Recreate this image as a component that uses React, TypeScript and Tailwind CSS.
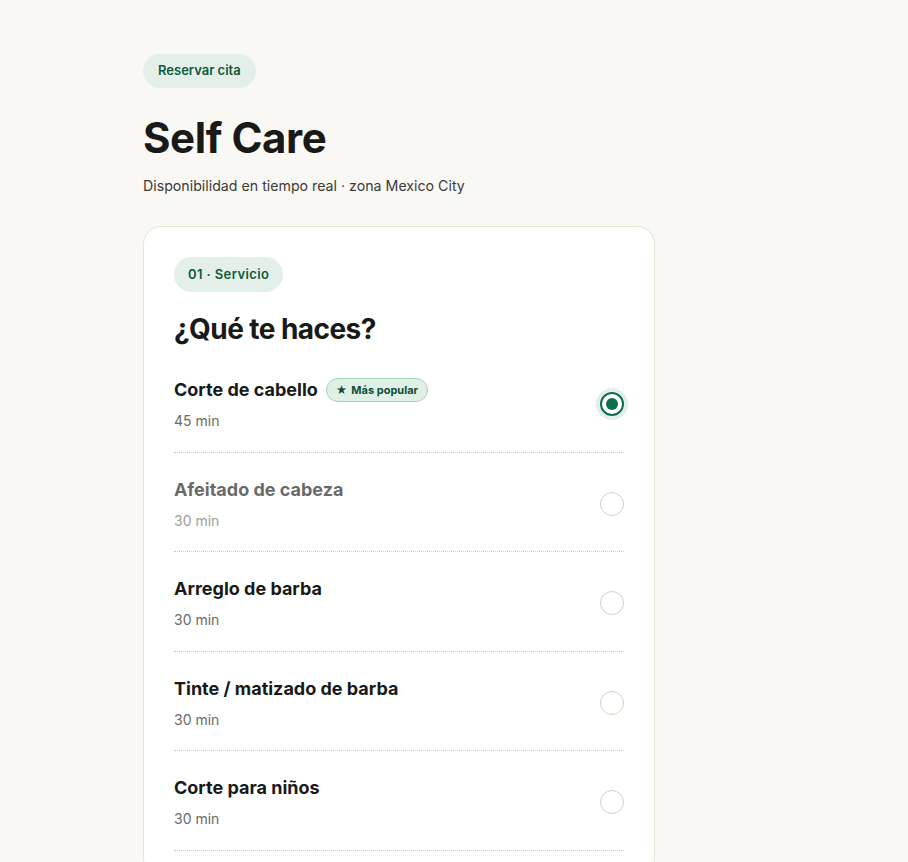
import { useState } from "react";

interface Service {
  id: string;
  name: string;
  duration: string;
  popular?: boolean;
  muted?: boolean;
}

const services: Service[] = [
  { id: "corte", name: "Corte de cabello", duration: "45 min", popular: true },
  { id: "afeitado", name: "Afeitado de cabeza", duration: "30 min", muted: true },
  { id: "barba", name: "Arreglo de barba", duration: "30 min" },
  { id: "tinte", name: "Tinte / matizado de barba", duration: "30 min" },
  { id: "ninos", name: "Corte para niños", duration: "30 min" },
];

function Radio({ checked }: { checked: boolean }) {
  if (checked) {
    return (
      <span className="flex h-[24px] w-[24px] items-center justify-center rounded-full border-2 border-[#0b6e4f] bg-white shadow-[0_0_0_4px_#e2f0e9]">
        <span className="h-[12px] w-[12px] rounded-full bg-[#0b6e4f]" />
      </span>
    );
  }
  return (
    <span className="h-[24px] w-[24px] rounded-full border border-[#d9cfbf] bg-white" />
  );
}

export default function App() {
  const [selected, setSelected] = useState("corte");

  return (
    <div
      className="min-h-screen bg-[#f9f8f4] text-[#191917]"
      style={{ fontFamily: "Inter, 'Noto Sans', sans-serif" }}
    >
      <div className="mx-auto w-[622px] pt-[54px]">
        <span className="inline-flex h-[34px] items-center rounded-full bg-[#e3efe8] px-[15px] text-[13px] font-semibold text-[#0f5a3d]">
          Reservar cita
        </span>

        <h1 className="mt-[24px] text-[42px] font-bold leading-[52px] tracking-[-0.01em]">
          Self Care
        </h1>
        <p className="mt-[12px] text-[14.2px] leading-5 text-[#3b3b38]">
          Disponibilidad en tiempo real · zona Mexico City
        </p>

        <div className="mt-[30px] w-[512px] rounded-[18px] border border-[#e9e2d6] bg-white px-[30px] pt-[30px] pb-6">
          <span className="inline-flex h-[35px] items-center rounded-full bg-[#e3efe8] px-[14px] text-[13px] font-semibold tracking-[0.03em] text-[#0f5a3d]">
            01 · Servicio
          </span>
          <h2 className="mt-[20px] text-[28px] font-bold leading-[34px] tracking-[-0.02em]">
            ¿Qué te haces?
          </h2>

          <ul className="mt-[7px]">
            {services.map((s) => (
              <li
                key={s.id}
                onClick={() => setSelected(s.id)}
                className="flex cursor-pointer items-center justify-between border-b border-dotted border-[#d3c9b8] pt-[24px] pb-[20.5px]"
              >
                <div className={s.muted ? "opacity-65" : ""}>
                  <div className="flex items-center gap-2">
                    <span className="text-[18px] font-bold leading-[26px]">
                      {s.name}
                    </span>
                    {s.popular && (
                      <span className="inline-flex h-[24px] items-center gap-1 rounded-full border border-[#a6d3bd] bg-[#dff0e7] px-[9px] text-[11px] font-bold text-[#0f4f37]">
                        <span className="text-[11px] leading-none">★</span>
                        Más popular
                      </span>
                    )}
                  </div>
                  <p className="mt-2 text-[14px] leading-5 text-[#6b6b67]">
                    {s.duration}
                  </p>
                </div>
                <Radio checked={selected === s.id} />
              </li>
            ))}
          </ul>
        </div>
      </div>
    </div>
  );
}
